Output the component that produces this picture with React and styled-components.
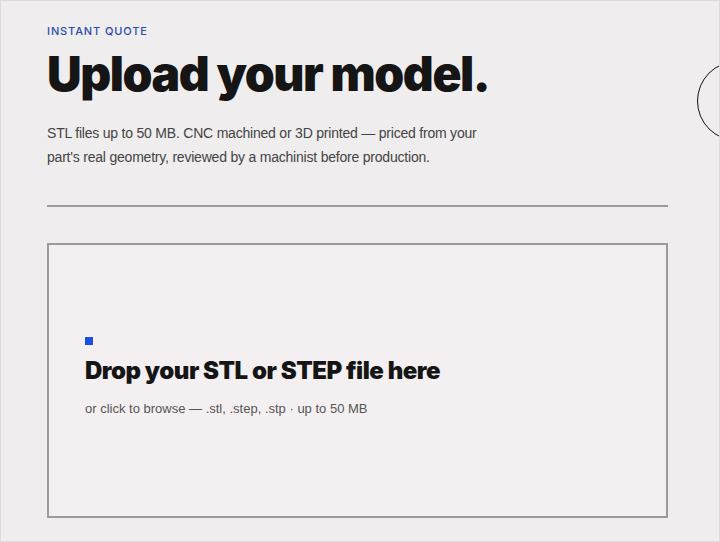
import React from 'react';
import styled, { createGlobalStyle } from 'styled-components';

const Global = createGlobalStyle`
  html, body {
    margin: 0;
    padding: 0;
    background: #efeded;
  }
  body {
    font-family: Inter, "Liberation Sans", Arial, sans-serif;
    overflow: hidden;
  }
`

const Page = styled.div`
  position: relative;
  box-sizing: border-box;
  width: 720px;
  height: 542px;
  padding: 23px 51px 0 46px;
  border: 1px solid #dcdadb;
  overflow: hidden;
`

const Eyebrow = styled.div`
  font-size: 11px;
  font-weight: 500;
  letter-spacing: 0.08em;
  color: #2a4cb3;
  line-height: 14px;
`

const Title = styled.h1`
  margin: 11px 0 0;
  font-size: 48px;
  font-weight: 900;
  letter-spacing: -0.03em;
  line-height: 50px;
  color: #151515;
`

const Lede = styled.p`
  margin: 22px 0 0;
  max-width: 440px;
  font-family: "Liberation Sans", Arial, sans-serif;
  font-size: 14px;
  line-height: 24px;
  letter-spacing: -0.015em;
  color: #444;
`

const Rule = styled.hr`
  margin: 36px 0 0;
  border: 0;
  height: 2px;
  background: #9c9a9b;
`

const Drop = styled.div`
  box-sizing: border-box;
  margin-top: 36px;
  height: 275px;
  padding: 0 36px 8px;
  border: 2px solid #9c9a9b;
  background: #f4f0f2;
  display: flex;
  flex-direction: column;
  justify-content: center;
  cursor: pointer;
`

const Marker = styled.span`
  display: block;
  width: 8px;
  height: 8px;
  background: #1a4fe0;
  margin: 0 0 11px;
`

const DropTitle = styled.h2`
  margin: 0;
  font-size: 24px;
  font-weight: 900;
  letter-spacing: -0.02em;
  line-height: 30px;
  color: #151515;
`

const DropHint = styled.p`
  margin: 15px 0 0;
  font-family: "Liberation Sans", Arial, sans-serif;
  font-size: 13px;
  letter-spacing: 0;
  color: #555;
`

const Cursor = styled.div`
  position: absolute;
  left: 696px;
  top: 60px;
  width: 78px;
  height: 78px;
  border: 1.5px solid #111;
  border-radius: 50%;
`

export default function App() {
  return (
    <>
      <Global />
      <Page>
        <Eyebrow>INSTANT QUOTE</Eyebrow>
        <Title>Upload your model.</Title>
        <Lede>
          STL files up to 50 MB. CNC machined or 3D printed — priced from your
          part's real geometry, reviewed by a machinist before production.
        </Lede>
        <Rule />
        <Drop>
          <Marker />
          <DropTitle>Drop your STL or STEP file here</DropTitle>
          <DropHint>or click to browse — .stl, .step, .stp · up to 50 MB</DropHint>
        </Drop>
        <Cursor />
      </Page>
    </>
  );
}
